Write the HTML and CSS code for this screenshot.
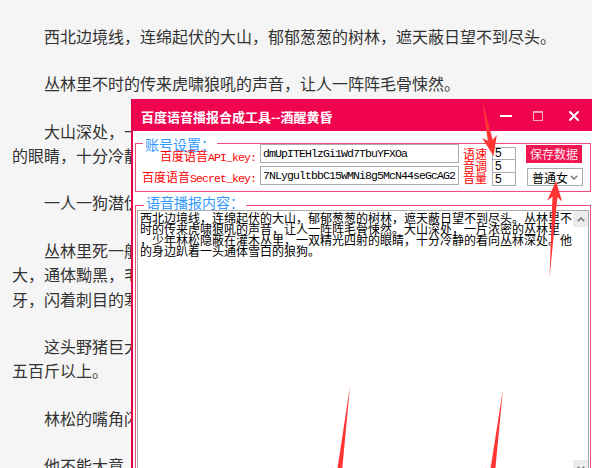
FILE: index.html
```html
<!DOCTYPE html>
<html lang="zh-CN">
<head>
<meta charset="utf-8">
<title>百度语音播报合成工具</title>
<link rel="stylesheet" href="styles.css">
</head>
<body>
<article class="story">
  <p>西北边境线，连绵起伏的大山，郁郁葱葱的树林，遮天蔽日望不到尽头。</p>
  <p>丛林里不时的传来虎啸狼吼的声音，让人一阵阵毛骨悚然。</p>
  <p>大山深处，一片浓密的丛林里，少年林松隐蔽在灌木丛里，一双精光四射的眼睛，十分冷静的看向丛林深处。</p>
  <p>一人一狗潜伏在这里，已经整整一天一夜了。</p>
  <p>丛林里死一般的寂静，突然，一头野猪从丛林深处缓缓钻了出来，体型巨大，通体黝黑，毛发如同钢针一般根根竖立，嘴边露出两根又长又弯的锋利獠牙，闪着刺目的寒光，看起来凶猛异常。</p>
  <p>这头野猪巨大无比，足足有一人多高，两米多长，看这样子体重至少也在五百斤以上。</p>
  <p>林松的嘴角闪过一丝冷笑，终于等到你了。</p>
  <p>他不能大意，这头野猪可不是好惹的。</p>
</article>

<div class="window">
  <div class="titlebar">
    <span class="title">百度语音播报合成工具--酒醒黄昏</span>
    <div class="controls">
      <svg class="ctl ctl-min" width="12" height="2" viewBox="0 0 12 2"><rect width="12" height="2" fill="#fff"/></svg>
      <svg class="ctl ctl-max" width="10" height="10" viewBox="0 0 10 10"><rect x="0.5" y="0.5" width="9" height="9" fill="none" stroke="#f7a3bb"/><rect x="0" y="0" width="10" height="2" fill="#f7a3bb"/></svg>
      <svg class="ctl ctl-close" width="10" height="10" viewBox="0 0 10 10"><path d="M1 1 L9 9 M9 1 L1 9" stroke="#fff" stroke-width="2" stroke-linecap="square"/></svg>
    </div>
  </div>
  <div class="win-body">
    <fieldset class="group group-account">
      <legend>账号设置：</legend>
      <div class="account-row">
        <div class="labels">
          <div class="label">百度语音<span class="latin">API_key:</span></div>
          <div class="label">百度语音<span class="latin">Secret_key:</span></div>
        </div>
        <div class="keys">
          <div class="field">dmUpITEHlzGi1Wd7TbuYFXOa</div>
          <div class="field">7NLygultbbC15WMNi8g5McN44seGcAG2</div>
        </div>
        <div class="param-labels">语速<br>音调<br>音量</div>
        <div class="params">
          <div class="num">5</div>
          <div class="num">5</div>
          <div class="num">5</div>
        </div>
        <div class="actions">
          <div class="btn-save">保存数据</div>
          <div class="select"><span class="select-text">普通女</span><svg class="chev" width="8" height="5" viewBox="0 0 8 5"><path d="M0.8 0.8 L4 4 L7.2 0.8" fill="none" stroke="#808080" stroke-width="1.6"/></svg></div>
        </div>
      </div>
    </fieldset>
    <fieldset class="group group-content">
      <legend>语音播报内容：</legend>
      <div class="textbox">
        <div class="textbox-text">西北边境线，连绵起伏的大山，郁郁葱葱的树林，遮天蔽日望不到尽头。丛林里不<br>时的传来虎啸狼吼的声音，让人一阵阵毛骨悚然。大山深处，一片浓密的丛林里<br>，少年林松隐蔽在灌木丛里，一双精光四射的眼睛，十分冷静的看向丛林深处。他<br>的身边趴着一头通体雪白的狼狗。</div>
        <div class="scrollbar">
          <div class="sb-btn"><svg width="8" height="5" viewBox="0 0 8 5"><path d="M0.8 4.2 L4 1 L7.2 4.2" fill="none" stroke="#777" stroke-width="1.6"/></svg></div>
          <div class="sb-btn"><svg width="8" height="5" viewBox="0 0 8 5"><path d="M0.8 0.8 L4 4 L7.2 0.8" fill="none" stroke="#777" stroke-width="1.6"/></svg></div>
        </div>
      </div>
    </fieldset>
  </div>
</div>

<svg class="annotations" width="592" height="468" viewBox="0 0 592 468">
  <polygon points="482,100 492.73,139.83 496.83,134.9 493.5,156 482.13,137.92 487.83,140.83" fill="#ff3535"/>
  <polygon points="549.5,278 557.42,197.13 562.14,201.45 556,181 547.18,200.45 552.44,196.79" fill="#ff3535"/>
  <polygon points="350,386 341.93,472.42 347.37,469.06 337.5,488 332.49,467.24 336.97,471.82" fill="#ff3535"/>
  <polygon points="503,389 494.98,472.44 500.45,469.1 490.5,488 485.57,467.22 490.02,471.82" fill="#ff3535"/>
</svg>
</body>
</html>
```

FILE: styles.css
```css
html, body {
  margin: 0;
  height: 100%;
  overflow: hidden;
}

body {
  position: relative;
  background: #f5f5f5;
  font-family: "Noto Sans CJK SC", sans-serif;
}

/* ---------- article behind the window ---------- */
.story {
  padding: 24px 30px 0 12px;
  color: #333;
  font-size: 16px;
  line-height: 24.5px;
}

.story p {
  margin: 0 0 22.75px;
  text-indent: 32px;
}

/* ---------- tool window ---------- */
.window {
  position: absolute;
  left: 131px;
  top: 99px;
  width: 463px;
  height: 390px;
  box-sizing: border-box;
  border: 2px solid #e3064a;
  border-top: 0;
  background: #fff;
  font-size: 12px;
}

.titlebar {
  height: 32px;
  box-sizing: border-box;
  padding: 2px 13px 0 8px;
  background: #f0034f;
  color: #fff;
  display: flex;
  align-items: center;
}

.title {
  flex: 1;
  font-size: 13px;
  font-weight: bold;
  white-space: nowrap;
}

.controls {
  display: flex;
  align-items: center;
}

.ctl {
  display: block;
}

.ctl-max {
  margin-left: 21px;
}

.ctl-close {
  margin-left: 26px;
}

.win-body {
  padding: 12px 1px 0 2px;
}

/* ---------- group boxes ---------- */
.group {
  margin: 0;
  min-width: 0;
  border: 1px solid #f04d74;
}

.group legend {
  padding: 0 2px;
  line-height: 0;
  font-size: 14px;
  color: #3399ff;
}

.group-account {
  padding: 0 0 3px 7px;
}

.group-content {
  margin-top: 10px;
  padding: 1px;
}

.group-content legend {
  margin-left: 7px;
  padding-bottom: 7px;
}

/* ---------- account row ---------- */
.account-row {
  display: flex;
  align-items: flex-start;
}

.labels {
  width: 114px;
  margin: 3px 0 0 -1px;
  display: flex;
  flex-direction: column;
  gap: 1px;
  text-align: right;
  color: #f00;
}

.label {
  line-height: 18px;
  white-space: nowrap;
}

.latin {
  font-family: "Liberation Mono", monospace;
  font-size: 11.5px;
  letter-spacing: -0.9px;
}

.keys {
  margin-left: 4px;
  display: flex;
  flex-direction: column;
  gap: 3px;
}

.field {
  width: 199px;
  height: 19px;
  box-sizing: border-box;
  border: 1px solid #ababab;
  padding: 0 2px;
  line-height: 17px;
  font-family: "Liberation Mono", monospace;
  font-size: 11.5px;
  letter-spacing: -0.9px;
  color: #000;
  white-space: nowrap;
  overflow: hidden;
}

.param-labels {
  width: 24px;
  margin: 4px 0 0 4px;
  color: #f00;
  font-size: 12px;
  line-height: 12px;
}

.params {
  margin: 3px 0 0 5px;
  display: flex;
  flex-direction: column;
}

.num {
  width: 24px;
  height: 13px;
  box-sizing: border-box;
  border: 1px solid #ababab;
  padding-left: 2px;
  font-family: "Liberation Sans", sans-serif;
  font-size: 12px;
  line-height: 11px;
  color: #000;
}

.num + .num {
  height: 14px;
  margin-top: -1px;
  line-height: 12px;
}

.actions {
  margin: 1px 0 0 10px;
  display: flex;
  flex-direction: column;
  gap: 5px;
}

.btn-save {
  width: 56px;
  height: 18px;
  background: #f0164f;
  color: #ffe6ee;
  font-size: 12px;
  line-height: 18px;
  text-align: center;
}

.select {
  width: 56px;
  height: 18px;
  margin-left: 1px;
  box-sizing: border-box;
  border: 1px solid #ababab;
  padding-left: 4px;
  display: flex;
  align-items: center;
  color: #000;
  font-size: 12px;
  white-space: nowrap;
}

.chev {
  display: block;
  margin-left: 2px;
}

/* ---------- text box ---------- */
.textbox {
  height: 267px;
  box-sizing: border-box;
  border: 1px solid #ababab;
  display: flex;
}

.textbox-text {
  flex: 1;
  padding: 1px 0 0 2px;
  font-size: 12px;
  line-height: 11px;
  color: #000;
  white-space: nowrap;
  overflow: hidden;
}

.scrollbar {
  width: 15px;
  display: flex;
  flex-direction: column;
  justify-content: space-between;
}

.sb-btn {
  height: 16px;
  background: #ececec;
  display: flex;
  align-items: center;
  justify-content: center;
}

.sb-btn svg {
  display: block;
}

/* ---------- screenshot annotations ---------- */
.annotations {
  position: absolute;
  left: 0;
  top: 0;
  pointer-events: none;
}
```
